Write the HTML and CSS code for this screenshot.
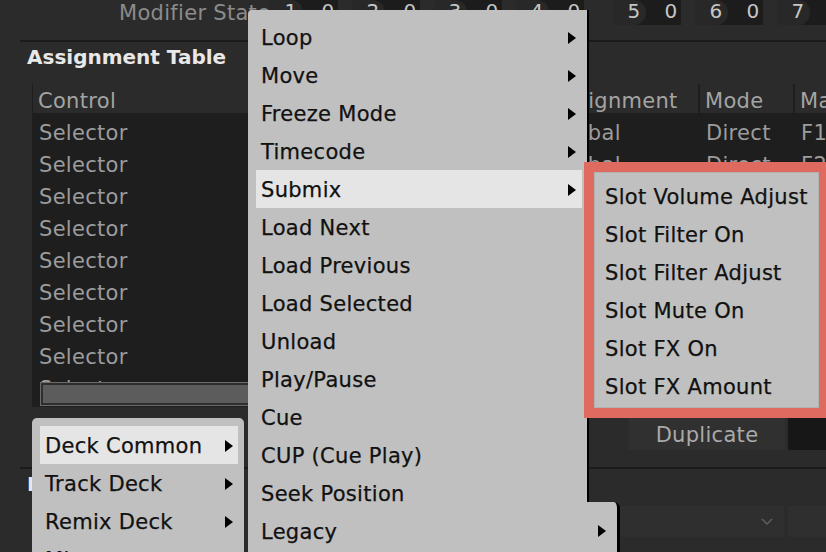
FILE: index.html
```html
<!DOCTYPE html>
<html>
<head>
<meta charset="utf-8">
<link rel="stylesheet" href="styles.css">
</head>
<body>
<div class="app">
  <div class="modbar">
    <span class="modbar-label">Modifier State</span>
    <div class="mod-group">
      <div class="mod"><span class="mod-a">1</span><span class="mod-b">0</span></div>
      <div class="mod"><span class="mod-a">2</span><span class="mod-b">0</span></div>
      <div class="mod"><span class="mod-a">3</span><span class="mod-b">0</span></div>
      <div class="mod"><span class="mod-a">4</span><span class="mod-b">0</span></div>
    </div>
    <div class="mod-group">
      <div class="mod"><span class="mod-a">5</span><span class="mod-b">0</span></div>
      <div class="mod"><span class="mod-a">6</span><span class="mod-b">0</span></div>
      <div class="mod"><span class="mod-a">7</span><span class="mod-b">0</span></div>
    </div>
  </div>
  <div class="divider divider-top"></div>
  <h2 class="section-title">Assignment Table</h2>
  <div class="table">
    <div class="thead">
      <div class="th">Control</div>
      <div class="th">I/O Type</div>
      <div class="th">Assignment</div>
      <div class="th">Mode</div>
      <div class="th">Mapped to</div>
    </div>
    <div class="tbody">
      <div class="tr"><div class="td">Selector</div><div class="td">In</div><div class="td">Global</div><div class="td">Direct</div><div class="td">F1</div></div>
      <div class="tr"><div class="td">Selector</div><div class="td">In</div><div class="td">Global</div><div class="td">Direct</div><div class="td">F2</div></div>
      <div class="tr"><div class="td">Selector</div><div class="td">In</div><div class="td">Global</div><div class="td">Direct</div><div class="td">F3</div></div>
      <div class="tr"><div class="td">Selector</div><div class="td">In</div><div class="td">Global</div><div class="td">Direct</div><div class="td">F4</div></div>
      <div class="tr"><div class="td">Selector</div><div class="td">In</div><div class="td">Global</div><div class="td">Direct</div><div class="td">F5</div></div>
      <div class="tr"><div class="td">Selector</div><div class="td">In</div><div class="td">Global</div><div class="td">Direct</div><div class="td">F6</div></div>
      <div class="tr"><div class="td">Selector</div><div class="td">In</div><div class="td">Global</div><div class="td">Direct</div><div class="td">F7</div></div>
      <div class="tr"><div class="td">Selector</div><div class="td">In</div><div class="td">Global</div><div class="td">Direct</div><div class="td">F8</div></div>
      <div class="tr"><div class="td">Selector</div><div class="td">In</div><div class="td">Global</div><div class="td">Direct</div><div class="td">F9</div></div>
      <div class="hscroll"></div>
    </div>
  </div>
  <div class="actions">
    <div class="btn-dup">Duplicate</div>
    <div class="dark-cell"></div>
  </div>
  <div class="divider divider-mid"></div>
  <h2 class="section-title section-title-2">Device Mapping</h2>
  <div class="selects">
    <div class="select">
      <svg class="chev" width="12" height="8" viewBox="0 0 12 8"><polyline points="1,1 6,6 11,1" fill="none" stroke="#5e5e5e" stroke-width="1.5"/></svg>
    </div>
    <div class="select select-small"></div>
  </div>
  <div class="footer-strip"></div>
</div>

<div class="menu menu-main">
  <div class="mi"><span>Loop</span><i class="arrow"></i></div>
  <div class="mi"><span>Move</span><i class="arrow"></i></div>
  <div class="mi"><span>Freeze Mode</span><i class="arrow"></i></div>
  <div class="mi"><span>Timecode</span><i class="arrow"></i></div>
  <div class="mi active"><span>Submix</span><i class="arrow"></i></div>
  <div class="mi"><span>Load Next</span></div>
  <div class="mi"><span>Load Previous</span></div>
  <div class="mi"><span>Load Selected</span></div>
  <div class="mi"><span>Unload</span></div>
  <div class="mi"><span>Play/Pause</span></div>
  <div class="mi"><span>Cue</span></div>
  <div class="mi"><span>CUP (Cue Play)</span></div>
  <div class="mi"><span>Seek Position</span></div>
  <div class="mi"><span>Legacy</span></div>
</div>
<div class="menu menu-ext"><i class="arrow"></i></div>

<div class="menu menu-left">
  <div class="mi active"><span>Deck Common</span><i class="arrow"></i></div>
  <div class="mi"><span>Track Deck</span><i class="arrow"></i></div>
  <div class="mi"><span>Remix Deck</span><i class="arrow"></i></div>
  <div class="mi"><span>Mixer</span><i class="arrow"></i></div>
</div>

<div class="menu menu-sub">
  <div class="mi"><span>Slot Volume Adjust</span></div>
  <div class="mi"><span>Slot Filter On</span></div>
  <div class="mi"><span>Slot Filter Adjust</span></div>
  <div class="mi"><span>Slot Mute On</span></div>
  <div class="mi"><span>Slot FX On</span></div>
  <div class="mi"><span>Slot FX Amount</span></div>
</div>
</body>
</html>
```

FILE: styles.css
```css
html, body {
  margin: 0;
  padding: 0;
}
body {
  width: 826px;
  height: 552px;
  overflow: hidden;
  position: relative;
  background: #2b2b2b;
  font-family: "DejaVu Sans", "Noto Sans", sans-serif;
  font-size: 21px;
  letter-spacing: 0.3px;
}
.app {
  width: 826px;
}

/* modifier bar */
.modbar {
  display: flex;
  align-items: center;
  height: 25px;
  padding-left: 119px;
  white-space: nowrap;
}
.modbar-label {
  color: #8c8c8c;
  width: 167px;
  line-height: 22px;
}
.mod-group {
  display: flex;
  gap: 14px;
}
.mod-group + .mod-group {
  margin-left: 29px;
}
.mod {
  display: flex;
  flex: none;
  width: 68px;
  height: 25px;
  background: #1c1c1c;
  color: #c6c6c6;
  font-size: 20px;
  line-height: 22px;
}
.mod-a {
  width: 33px;
  box-sizing: border-box;
  padding-left: 14px;
  background: #282828;
  border-radius: 0 12px 12px 0;
}
.mod-b {
  padding-left: 18px;
}

.divider {
  height: 2px;
  background: #1b1b1b;
  margin-left: 20px;
}
.divider-top {
  margin-top: 15px;
}
.divider-mid {
  margin-top: 17px;
}

.section-title {
  margin: 0;
  padding-left: 27px;
  height: 28px;
  line-height: 30px;
  font-size: 20px;
  font-weight: bold;
  letter-spacing: 0;
  color: #e8e8e8;
}

/* table */
.table {
  margin-top: 14px;
  margin-left: 32px;
  padding-left: 1px;
  background: #1e1e1e;
}
.thead,
.tr {
  display: grid;
  grid-template-columns: 300px 209px 152px 93px 1fr;
  column-gap: 2px;
}
.thead {
  height: 29px;
}
.th {
  background: #2b2b2b;
  color: #a4a4a4;
  padding-left: 5px;
  line-height: 34px;
  height: 29px;
  white-space: nowrap;
  overflow: hidden;
}
.tbody {
  position: relative;
  height: 291px;
  margin-top: 3px;
  overflow: hidden;
}
.tr {
  height: 32px;
  line-height: 34px;
  color: #9c9c9c;
}
.td {
  padding-left: 6px;
  white-space: nowrap;
  overflow: hidden;
  height: 32px;
}
.hscroll {
  position: absolute;
  left: 7px;
  top: 266px;
  width: 560px;
  height: 24px;
  box-sizing: border-box;
  border: 1px solid #6a6a6a;
  box-shadow: inset 0 0 0 2px #2e2e2e;
  background: #5c5c5c;
}

/* actions */
.actions {
  display: flex;
  justify-content: flex-end;
  height: 32px;
  margin-top: 11px;
}
.btn-dup {
  width: 156px;
  background: #303030;
  color: #a9a9a9;
  text-align: center;
  line-height: 34px;
}
.dark-cell {
  width: 38px;
  margin-left: 3px;
  background: #171717;
}

.section-title-2 {
  height: 28px;
}

.selects {
  display: flex;
  justify-content: flex-end;
  height: 31px;
  margin-top: 9px;
}
.select {
  width: 530px;
  background: #2f2f2f;
  display: flex;
  align-items: center;
  justify-content: flex-end;
  padding-right: 11px;
  box-sizing: border-box;
}
.select-small {
  width: 38px;
  margin-left: 4px;
  padding: 0;
}
.chev {
  display: block;
}
.footer-strip {
  height: 11px;
}

/* menus */
.menu {
  position: absolute;
  background: #c0c0c0;
  color: #111;
  box-sizing: border-box;
  -webkit-text-stroke: 0.25px #111;
}
.mi {
  display: flex;
  align-items: center;
  justify-content: space-between;
  height: 38px;
  padding: 1px 6px 0 5px;
  box-sizing: border-box;
  white-space: nowrap;
}
.mi.active {
  background: #e5e5e5;
}
.arrow {
  display: block;
  width: 0;
  height: 0;
  border-left: 8px solid #000;
  border-top: 6px solid transparent;
  border-bottom: 6px solid transparent;
}
.menu-main {
  left: 248px;
  top: 10px;
  width: 341px;
  height: 560px;
  padding: 8px 5px 0 8px;
  border-right: 2px solid #000;
  border-top-left-radius: 4px;
}
.menu-ext {
  left: 586px;
  top: 502px;
  width: 34px;
  height: 60px;
  padding: 23px 0 0 12px;
  border-right: 3px solid #000;
  border-top-right-radius: 6px;
}
.menu-left {
  left: 32px;
  top: 418px;
  width: 212px;
  height: 140px;
  padding: 8px 6px 0 8px;
  border-radius: 5px 5px 0 0;
}
.menu-left .mi {
  padding-right: 5px;
}
.menu-sub {
  left: 584px;
  top: 162px;
  width: 242px;
  height: 256px;
  padding: 5px 0 0 11px;
  border: 10px solid #df6a5f;
  border-right-width: 7px;
  box-shadow: inset 0 0 0 1px #b2b2b2;
}
.menu-sub .mi {
  padding-left: 0;
}
```
